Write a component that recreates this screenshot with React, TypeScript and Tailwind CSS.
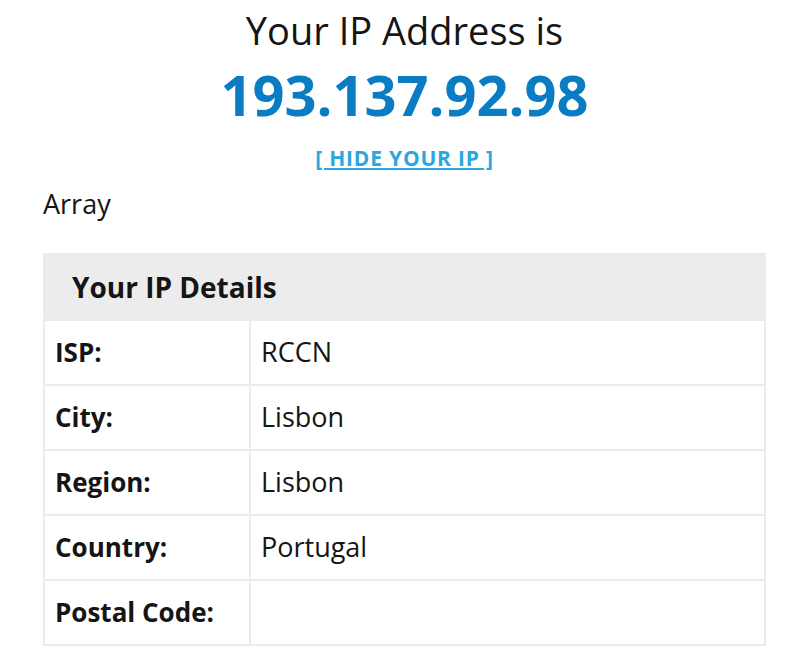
import React from 'react'

const rows: { label: string; value: string }[] = [
  { label: 'ISP:', value: 'RCCN' },
  { label: 'City:', value: 'Lisbon' },
  { label: 'Region:', value: 'Lisbon' },
  { label: 'Country:', value: 'Portugal' },
  { label: 'Postal Code:', value: '' },
]

function App() {
  return (
    <div className="min-h-screen bg-white font-['Open_Sans',sans-serif] text-[#151515]">
      <div className="ml-[43px] w-[723px]">
        <div className="flex flex-col items-center">
          <h1 className="text-[38px] leading-[50px] pt-[5px]">Your IP Address is</h1>
          <div className="text-[56px] leading-[78px] font-bold text-[#0a7cc4]">193.137.92.98</div>
          <a
            href="#"
            className="mt-[12px] text-[21px] leading-[26px] font-bold tracking-[0.8px] text-[#2ba6de] underline underline-offset-2"
          >
            [ HIDE YOUR IP ]
          </a>
        </div>
        <p className="mt-[16px] text-[27px] leading-[34px]">Array</p>
        <div className="mt-[32px] border-2 border-[#ebebeb]">
          <div className="bg-[#ececec] h-[64px] flex items-center px-[27px] text-[28px] font-bold">
            Your IP Details
          </div>
          {rows.map((r) => (
            <div key={r.label} className="flex h-[65px] border-t-2 border-[#ebebeb]">
              <div className="w-[206px] flex items-center px-[10px] text-[26px] font-bold border-r-2 border-[#ebebeb]">
                {r.label}
              </div>
              <div className="flex-1 flex items-center px-[10px] text-[27px]">{r.value}</div>
            </div>
          ))}
        </div>
      </div>
    </div>
  )
}

export default App
